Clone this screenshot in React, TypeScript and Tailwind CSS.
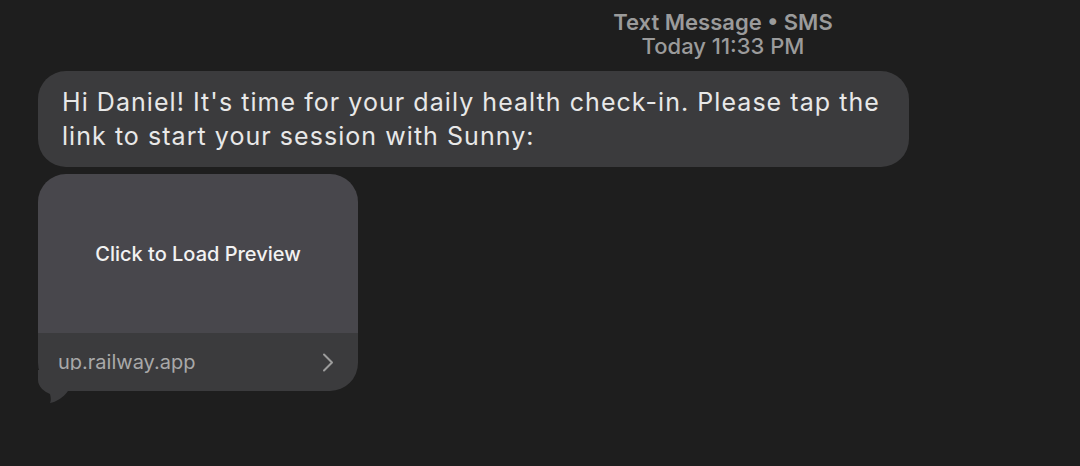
import React from 'react'

const font = { fontFamily: 'Inter, "Noto Sans", sans-serif' }

export default function App() {
  return (
    <div style={font} className="w-[1080px] h-[466px] bg-[#1e1e1e] overflow-hidden flex flex-col">
      {/* Header */}
      <div className="pl-[366px] pt-[11px] flex flex-col items-center text-[#9b9b9b] text-[22px] leading-[23.5px] font-semibold">
        <div>Text Message • SMS</div>
        <div className="font-medium">Today 11:33 PM</div>
      </div>

      {/* Message bubble */}
      <div className="ml-[38px] mt-[13px] w-[871px] rounded-[28px] bg-[#3b3b3d] px-6 py-[14px] text-[#e8e8e8] text-[25px] leading-[34px] tracking-[1.05px]">
        Hi Daniel! It's time for your daily health check-in. Please tap the link to start your session with Sunny:
      </div>

      {/* Link preview */}
      <div className="relative ml-[38px] mt-[7px] w-[320px]">
        <div className="rounded-[28px] overflow-hidden flex flex-col">
          <div className="h-[159px] bg-[#48474c] flex items-center justify-center text-[#f2f2f2] text-[20px] font-medium">
            Click to Load Preview
          </div>
          <div className="h-[58px] bg-[#3b3b3d] flex items-center justify-between pl-[20px] pr-[24px]">
            <span className="text-[#a9a9a9] text-[20px]">up.railway.app</span>
            <svg width="12" height="19" viewBox="0 0 12 19" fill="none">
              <polyline points="2,1.5 10,9.5 2,17.5" stroke="#9c9c9c" strokeWidth="2" strokeLinecap="round" strokeLinejoin="round" />
            </svg>
          </div>
        </div>
        <svg className="absolute left-0 top-[196px]" width="40" height="35" viewBox="0 0 40 35">
          <path d="M0,0 L0,10 C0,17 7,22 12,24 C13,28 13,31 12,33 C18,32 25,28 30,21 L40,21 L40,0 Z" fill="#3b3b3d" />
        </svg>
      </div>
    </div>
  )
}
